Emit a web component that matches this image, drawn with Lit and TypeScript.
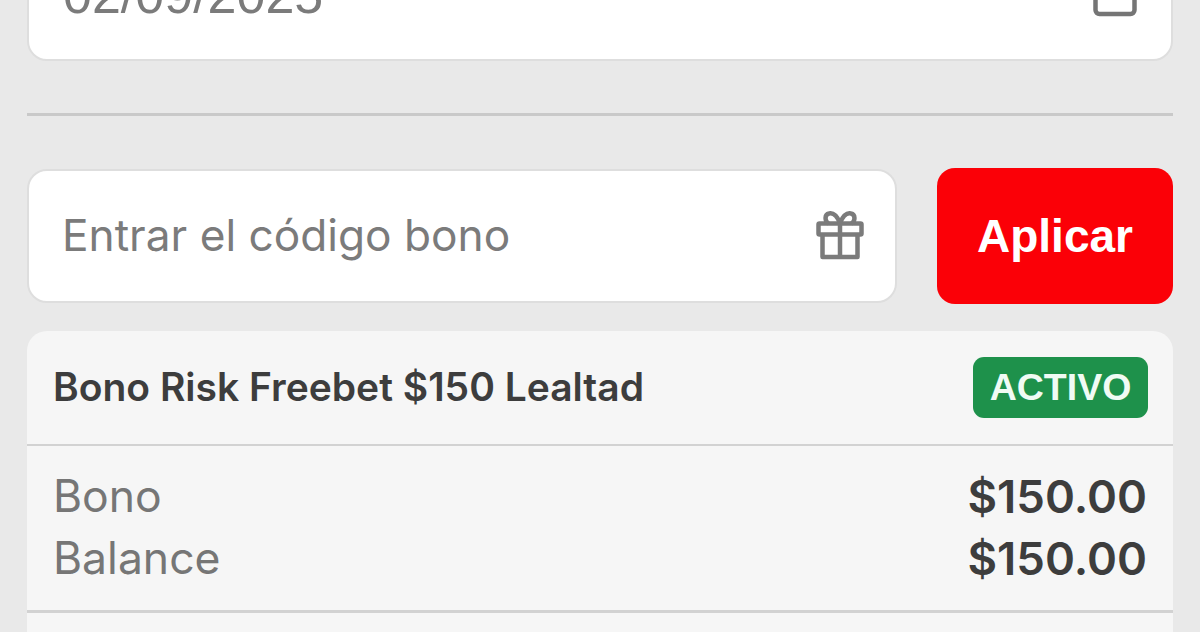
import { LitElement, html, css } from 'lit';
import { customElement } from 'lit/decorators.js';

@customElement('app-root')
export class AppRoot extends LitElement {
  static styles = css`
    :host {
      display: block;
      height: 632px;
      overflow: hidden;
      background: #e9e9e9;
      font-family: 'Inter', 'Liberation Sans', sans-serif;
    }
    .page {
      margin-top: -72px;
      padding: 0 27px;
      display: flex;
      flex-direction: column;
    }
    .field {
      box-sizing: border-box;
      background: #fff;
      border: 2px solid #dedede;
      border-radius: 20px;
      display: flex;
      align-items: center;
      justify-content: space-between;
      color: #7b7b7b;
      font-size: 44.2px;
    }
    .date {
      height: 133px;
      padding: 0 34px 0 34px;
      font: 52px 'Liberation Sans', sans-serif;
    }
    .date svg {
      display: block;
      margin-bottom: 4px;
    }
    .rule {
      height: 3px;
      background: #c9c9c9;
      margin: 52px 0 53px;
    }
    .code-row {
      display: flex;
      gap: 40px;
      align-items: stretch;
    }
    .code {
      flex: 1;
      height: 134px;
      padding: 0 30px 2px 33px;
    }
    .apply {
      width: 236px;
      height: 136px;
      margin-top: -1px;
      border: none;
      border-radius: 18px;
      background: #fb0007;
      color: #fff;
      font: 700 46px 'Liberation Sans', sans-serif;
      padding: 0;
    }
    .card {
      margin-top: 27px;
      background: #f6f6f6;
      border-radius: 20px 20px 0 0;
    }
    .card-head {
      height: 113px;
      padding: 0 25px 0 26px;
      display: flex;
      align-items: center;
      justify-content: space-between;
      border-bottom: 2px solid #d2d2d2;
    }
    .title {
      font-size: 39px;
      font-weight: 600;
      color: #3d3d3d;
      margin-bottom: 2px;
    }
    .badge {
      box-sizing: border-box;
      height: 61px;
      width: 175px;
      border-radius: 11px;
      background: #1e914b;
      color: #f0fbf4;
      font: 700 37.5px/61px 'Liberation Sans', sans-serif;
      text-align: center;
    }
    .rows {
      padding: 19px 26px 21px;
      border-bottom: 3px solid #d2d2d2;
    }
    .row {
      height: 62px;
      display: flex;
      align-items: center;
      justify-content: space-between;
      font-size: 44.5px;
      color: #767676;
    }
    .amount {
      font-weight: 600;
      font-size: 45.5px;
      color: #3d3d3d;
    }
    .rest {
      height: 40px;
      background: #f6f6f6;
    }
  `;

  render() {
    return html`
      <div class="page">
        <div class="field date">
          <span>02/09/2025</span>
          <svg width="44" height="48" viewBox="0 0 44 48" fill="none" stroke="#757575" stroke-width="4.5">
            <rect x="2.5" y="2" width="39" height="43" rx="4"></rect>
          </svg>
        </div>
        <div class="rule"></div>
        <div class="code-row">
          <div class="field code">
            <span>Entrar el código bono</span>
            <svg width="50" height="50" viewBox="0 0 50 50" fill="none" stroke="#7b7b7b" stroke-width="4.5" stroke-linejoin="round">
              <rect x="3.5" y="13.5" width="43" height="11" rx="1"></rect>
              <path d="M7.5 24.5V47h35V24.5M25 13.5V47"></path>
              <path d="M25 13C22 6 18 2.500 14 3.500 9.500 4.500 9.500 11 13.500 13.500M25 13C28 6 32 2.500 36 3.500 40.500 4.500 40.500 11 36.500 13.500"></path>
            </svg>
          </div>
          <button class="apply">Aplicar</button>
        </div>
        <div class="card">
          <div class="card-head">
            <span class="title">Bono Risk Freebet $150 Lealtad</span>
            <span class="badge">ACTIVO</span>
          </div>
          <div class="rows">
            <div class="row"><span>Bono</span><span class="amount">$150.00</span></div>
            <div class="row"><span>Balance</span><span class="amount">$150.00</span></div>
          </div>
          <div class="rest"></div>
        </div>
      </div>
    `;
  }
}
